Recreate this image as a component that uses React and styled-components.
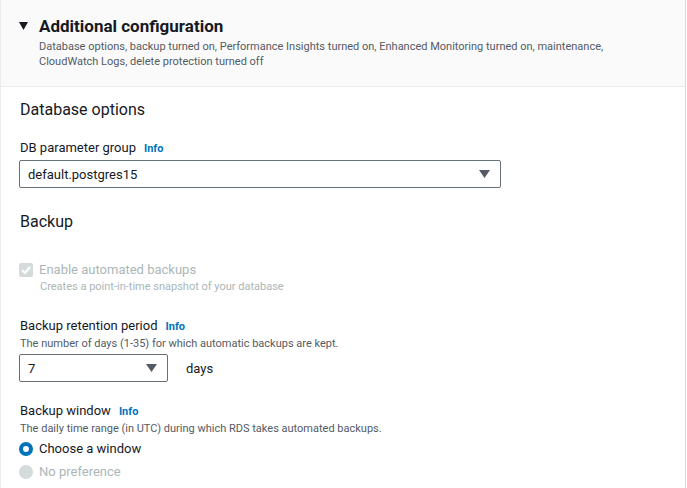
import React from 'react';
import styled, { createGlobalStyle } from 'styled-components';

const GlobalStyle = createGlobalStyle`
  body {
    margin: 0;
    background: #ffffff;
    font-family: Roboto, "Liberation Sans", sans-serif;
    color: #16191f;
  }
`;

const Panel = styled.div`
  width: 684px;
  height: 488px;
  border-left: 1px solid #eaeded;
  border-right: 1px solid #d5dbdb;
  overflow: hidden;
`;

const Header = styled.div`
  background: #fafafa;
  border-bottom: 1px solid #eaeded;
  padding: 15px 20px 17px 18px;
  display: flex;
  gap: 11px;
`;

const Caret = styled.svg`
  width: 9px;
  height: 9px;
  margin-top: 6px;
  flex-shrink: 0;
`;

const HeaderText = styled.div`
  display: flex;
  flex-direction: column;
`;

const Title = styled.h2`
  margin: 0;
  font-size: 17px;
  font-weight: 700;
  line-height: 22px;
`;

const HeaderDesc = styled.p`
  margin: 2px 0 0;
  font-size: 11px;
  line-height: 15px;
  color: #545b64;
`;

const Body = styled.div`
  padding: 11px 20px 0 18px;
  display: flex;
  flex-direction: column;
`;

const SectionTitle = styled.h3`
  margin: 0 0 ${(p) => p.gap || 16}px 1px;
  font-size: 16px;
  font-weight: 400;
  line-height: 24px;
`;

const Field = styled.div`
  display: flex;
  flex-direction: column;
  margin-bottom: ${(p) => p.gap || 0}px;
`;

const Label = styled.div`
  display: flex;
  align-items: baseline;
  gap: 8px;
  font-size: 13px;
  line-height: 18px;
  margin-left: 1px;
`;

const Info = styled.span`
  color: #0073bb;
  font-weight: 700;
  font-size: 11px;
`;

const Hint = styled.div`
  font-size: 11px;
  line-height: 16px;
  color: ${(p) => (p.muted ? '#aab7b8' : '#545b64')};
  margin-left: 1px;
`;

const SelectRow = styled.div`
  display: flex;
  align-items: center;
  gap: 18px;
  margin-top: ${(p) => p.top || 4}px;
`;

const Select = styled.div`
  width: ${(p) => p.width}px;
  height: 28px;
  box-sizing: border-box;
  border: 1px solid #687078;
  border-radius: 2px;
  display: flex;
  align-items: center;
  justify-content: space-between;
  padding: 0 10px 0 8px;
  font-size: 13px;
`;

const Arrow = styled.svg`
  width: 11px;
  height: 8px;
`;

const Unit = styled.span`
  font-size: 13px;
`;

const CheckRow = styled.div`
  display: flex;
  gap: 6px;
  align-items: flex-start;
`;

const CheckBox = styled.div`
  width: 14px;
  height: 14px;
  margin-top: 2px;
  border-radius: 2px;
  background: #d5dbdb;
  display: flex;
  align-items: center;
  justify-content: center;
`;

const CheckText = styled.div`
  display: flex;
  flex-direction: column;
`;

const OptionLabel = styled.div`
  font-size: 13px;
  line-height: 18px;
  color: ${(p) => (p.muted ? '#aab7b8' : '#16191f')};
`;

const RadioRow = styled.div`
  display: flex;
  align-items: center;
  gap: 6px;
  height: 23px;
`;

const Radio = styled.div`
  width: 14px;
  height: 14px;
  box-sizing: border-box;
  border-radius: 50%;
  border: ${(p) => (p.checked ? '4px solid #0073bb' : 'none')};
  background: ${(p) => (p.checked ? '#ffffff' : '#d5dbdb')};
`;

const DownArrow = () => (
  <Arrow viewBox="0 0 11 8">
    <path d="M0 0h11L5.5 8z" fill="#545b64" />
  </Arrow>
);

export default function App() {
  return (
    <>
      <GlobalStyle />
      <Panel>
        <Header>
          <Caret viewBox="0 0 9 9">
            <path d="M0 1h9L4.5 9z" fill="#16191f" />
          </Caret>
          <HeaderText>
            <Title>Additional configuration</Title>
            <HeaderDesc>
              Database options, backup turned on, Performance Insights turned on, Enhanced Monitoring turned on, maintenance,
              <br />
              CloudWatch Logs, delete protection turned off
            </HeaderDesc>
          </HeaderText>
        </Header>
        <Body>
          <SectionTitle gap={17}>Database options</SectionTitle>
          <Field gap={22}>
            <Label>
              DB parameter group <Info>Info</Info>
            </Label>
            <SelectRow top={2}>
              <Select width={482}>
                default.postgres15
                <DownArrow />
              </Select>
            </SelectRow>
          </Field>
          <SectionTitle gap={27}>Backup</SectionTitle>
          <Field gap={22}>
            <CheckRow>
              <CheckBox>
                <svg width="10" height="8" viewBox="0 0 10 8">
                  <path d="M1 4l3 3 5-6" stroke="#fff" strokeWidth="2" fill="none" />
                </svg>
              </CheckBox>
              <CheckText>
                <OptionLabel muted>Enable automated backups</OptionLabel>
                <Hint muted>Creates a point-in-time snapshot of your database</Hint>
              </CheckText>
            </CheckRow>
          </Field>
          <Field gap={20}>
            <Label>
              Backup retention period <Info>Info</Info>
            </Label>
            <Hint>The number of days (1-35) for which automatic backups are kept.</Hint>
            <SelectRow top={2}>
              <Select width={149}>
                7
                <DownArrow />
              </Select>
              <Unit>days</Unit>
            </SelectRow>
          </Field>
          <Field>
            <Label>
              Backup window <Info>Info</Info>
            </Label>
            <Hint>The daily time range (in UTC) during which RDS takes automated backups.</Hint>
            <RadioRow>
              <Radio checked />
              <OptionLabel>Choose a window</OptionLabel>
            </RadioRow>
            <RadioRow>
              <Radio />
              <OptionLabel muted>No preference</OptionLabel>
            </RadioRow>
          </Field>
        </Body>
      </Panel>
    </>
  );
}
